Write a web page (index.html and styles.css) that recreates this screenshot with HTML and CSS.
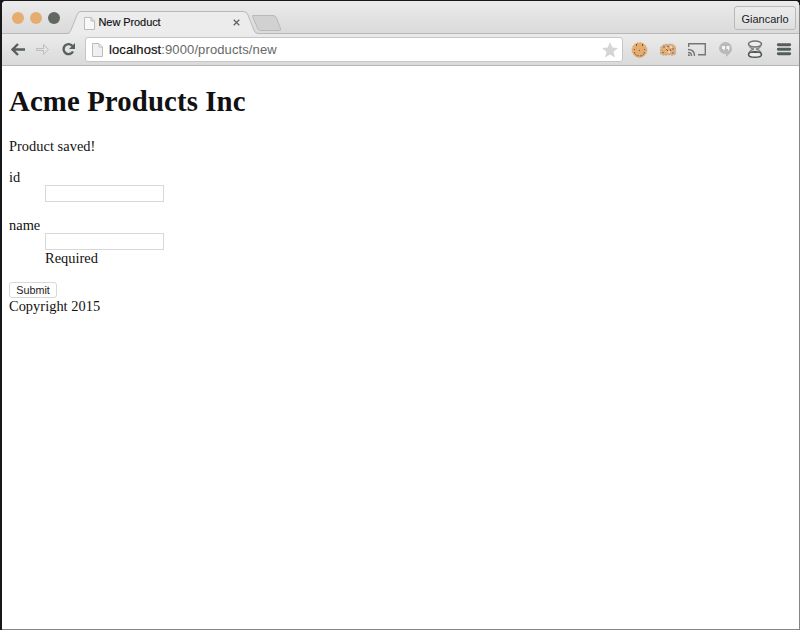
FILE: index.html
```html
<!DOCTYPE html>
<html lang="en">
<head>
<meta charset="utf-8">
<title>New Product</title>
<link rel="stylesheet" href="styles.css">
</head>
<body>
<div class="window">
  <header class="tabstrip">
    <div class="lights"><i class="light"></i><i class="light"></i><i class="light dark"></i></div>
    <div class="tab">
      <svg class="tab-shape" width="217" height="24" viewBox="0 0 217 24"><path d="M0 23.500C4 23 4 21 5 19L11 4Q12 1 15 1H178Q181 1 182 4L188 19Q189 22.500 192 22.500H192V24H0Z" fill="#ececec"/><path d="M0 22.500C4 22.500 4 21 5 19L11 4Q12 .5 15 .5H177Q181 .5 182 4L188 19Q189 22.500 192 22.500H217" fill="none" stroke="#b8b8b8"/><path d="M186.500 5.500Q185.500 4.500 188 4.500H207Q209.500 4.500 210.500 7L214.500 17.500Q215.500 19.500 213 19.500H194.500Q192.500 19.500 191.500 17Z" fill="#d1d1d1" stroke="#b8b8b8"/></svg>
      <svg class="page-icon" width="11" height="13" viewBox="0 0 11 13"><path d="M.5.5H7L10.500 4V12.500H.5ZM7 .5V4H10.500" fill="#f8f8f8" stroke="#bcbcbc"/></svg>
      <span class="tab-title">New Product</span>
      <svg class="close" width="7" height="7" viewBox="0 0 7 7"><path d="M.7.7L6.300 6.300M6.300.7L.7 6.300" stroke="#606462" stroke-width="1.300"/></svg>
    </div>
    <div class="profile">Giancarlo</div>
  </header>
  <nav class="toolbar">
    <svg class="nav-icons" width="83" height="31" viewBox="2 34 83 31">
      <g fill="none" stroke="#58605a" stroke-width="2.400"><path d="M25 49.500H13M18 44L12.500 49.500L18 55"/><path d="M72.500 46A5 5 0 1 0 73 51.500"/></g>
      <path d="M75 43V49H69Z" fill="#58605a"/>
      <path d="M36.500 48.500H43.500V44.500L48.500 49.500L43.500 54.500V50.500H36.500Z" fill="#e2e2e2" stroke="#bdbdbd"/>
    </svg>
    <div class="address">
      <svg class="page-icon" width="11" height="14" viewBox="0 0 11 14"><path d="M.5.5H7L10.500 4V13.500H.5ZM7 .5V4H10.500" fill="#f0f0f0" stroke="#bcbcbc"/></svg>
      <span class="url"><b>localhost</b>:9000/products/new</span>
      <svg class="star" width="16" height="16" viewBox="0 0 16 16"><path d="M8 0L10.300 5.500L16 6L11.500 9.700L13 15.500L8 12.500L3 15.500L4.500 9.700L0 6L5.700 5.500Z" fill="#d5d5d5"/></svg>
    </div>
    <svg class="extensions" width="176" height="31" viewBox="623 34 176 31">
      <circle cx="639.500" cy="50" r="7.600" fill="#e5ac6d"/>
      <circle cx="639.500" cy="50" r="7.600" fill="none" stroke="#c3a37e" stroke-dasharray="1 2"/>
      <g fill="#655b4d"><path d="M636 44h1v2h-1zM642 44h1v2h-1zM639 50h1v1h-1zM634 49h1v1h-1zM644 49h1v1h-1z"/></g>
      <path d="M634.500 52Q635 56 639.500 56T644.500 52" fill="none" stroke="#655b4d" stroke-dasharray="1.500 1"/>
      <path d="M660.500 54V48Q663 43.500 668 44.500Q673 43 675.500 47V54Q673 56 669 54.500Q664 56 660.500 54Z" fill="#e3ad75" stroke="#b8a890" stroke-dasharray="2 1"/>
      <path d="M663 47h2M667 46l2 1M672 49h2M666 49l2 2M670 49l1 2M662 52l2 1M672 53h2" stroke="#756b5c"/>
      <path d="M670 47h2M666 48h1M668 52h2" stroke="#fff"/>
      <g fill="none" stroke="#737875" stroke-width="1.400"><path d="M688.700 47V43.700H705.300V54.800H698"/><path d="M688 49.500Q694.500 49.500 694.500 56M688 52.500Q691.500 52.500 691.500 56"/></g><path d="M688 54v2h2q0-2-2-2z" fill="#737875"/>
      <path d="M725.500 42A6.500 6.500 0 0 1 732 48.500C732 52 729 54 726 57V54A6.200 6.200 0 0 1 719 48.500A6.500 6.500 0 0 1 725.500 42Z" fill="#b9b9b9"/>
      <path d="M722 46h3v3l-1.500 2v-2H722zM726.500 46h3v3L728 51v-2h-1.500z" fill="#f5f5f5"/>
      <ellipse cx="755" cy="44" rx="6.500" ry="3" fill="#eee" stroke="#707571" stroke-width="1.600"/>
      <path d="M749 45Q750 48.500 754 49Q750 50 749 53M761 45Q760 48.500 756 49Q760 50 761 53" fill="none" stroke="#858985" stroke-width="1.300"/>
      <ellipse cx="755" cy="54.500" rx="6.500" ry="2.800" fill="#eee" stroke="#505651" stroke-width="1.600"/>
      <path d="M751 53Q755 50 759 53Z" fill="#505651"/>
      <path d="M778.300 44.700H789.700M778.300 49.200H789.700M778.300 53.700H789.700" stroke="#555d57" stroke-width="2.900" stroke-linecap="round"/>
    </svg>
  </nav>
  <main class="page">
    <h1>Acme Products Inc</h1>
    <p>Product saved!</p>
    <form>
      <dl>
        <dt><label for="id">id</label></dt>
        <dd><input id="id" type="text"></dd>
      </dl>
      <dl>
        <dt><label for="name">name</label></dt>
        <dd><input id="name" type="text"></dd>
        <dd>Required</dd>
      </dl>
      <button type="button">Submit</button>
    </form>
    <footer>Copyright 2015</footer>
  </main>
</div>
</body>
</html>
```
FILE: styles.css
```css
* { box-sizing: border-box; }
body {
  margin: 0;
  height: 630px;
  padding: 1px 1px 1px 2px;
  overflow: hidden;
  background: linear-gradient(#18181a, #18181a) left / 2px 100% no-repeat, linear-gradient(#18181a, #18181a) top / 100% 5px no-repeat, #858585;
}
svg { display: block; flex: none; }
.window {
  height: 628px;
  background: #fff;
  border-radius: 4px 4px 0 0;
  overflow: hidden;
  font-family: "Liberation Sans", Arial, sans-serif;
}
.tabstrip {
  display: flex;
  height: 33px;
  padding-right: 3px;
  background: linear-gradient(#ebebeb, #e6e6e6 30%, #dadada);
  border-bottom: 1px solid #b8b8b8;
}
.lights {
  display: flex;
  gap: 6px;
  padding: 11px 0 0 10px;
  width: 64px;
}
.light { width: 12px; height: 12px; border-radius: 50%; background: #e5ae70; }
.dark { background: #616862; }
.tab {
  position: relative;
  display: flex;
  align-items: center;
  width: 217px;
  height: 24px;
  margin-top: 10px;
  padding-left: 18px;
}
.tab-shape { position: absolute; left: 0; top: 0; }
.tab .page-icon, .tab-title, .close { position: relative; }
.tab-title { width: 135px; margin: -2px 0 0 3.500px; font-size: 11px; line-height: 16px; letter-spacing: -.08px; color: #111; -webkit-text-stroke: .15px #111; }
.close { margin: -1px 0 0 -.5px; }
.profile {
  width: 62px;
  height: 24px;
  margin: 5px 0 0 auto;
  border: 1px solid #b9b9b9;
  border-radius: 3px;
  background: linear-gradient(#ececec, #dfdfdf);
  color: #1b1b1b;
  font-size: 11px;
  line-height: 24px;
  text-align: center;
}
.toolbar {
  display: flex;
  height: 32px;
  background: linear-gradient(#ebebeb, #dadada);
  border-bottom: 1px solid #b6b6b6;
}
.address {
  display: flex;
  align-items: center;
  width: 538px;
  height: 25px;
  margin-top: 3px;
  padding: 0 4px 0 6px;
  border: 1px solid #c6c6c6;
  border-radius: 3px;
  background: #fff;
}
.url { margin-left: 6px; font-size: 13px; line-height: 18px; letter-spacing: .11px; color: #656965; white-space: nowrap; }
.url b { font-weight: 400; color: #111; -webkit-text-stroke: .2px #111; }
.star { margin-left: auto; }
.page {
  padding: 19px 7px 0;
  font-family: "Liberation Serif", "Times New Roman", serif;
  font-size: 14.400px;
  line-height: 17px;
  letter-spacing: .03px;
  color: #111;
}
h1 { margin: 0; height: 32px; font-size: 28.800px; line-height: 32px; letter-spacing: .12px; white-space: nowrap; }
p { margin: 21px 0 14px; }
dl { margin: 0 0 15px; }
dt { height: 16px; }
dd { margin: 0 0 0 36px; }
input {
  display: block;
  width: 119px;
  height: 17px;
  border: 1px solid #d8d8d8;
  background: #fff;
}
button {
  display: block;
  width: 48px;
  height: 16px;
  padding: 0;
  border: 1px solid #d8d8d8;
  border-radius: 3px;
  background: #fff;
  color: #1b1b1b;
  font: 10.800px/14px "Liberation Sans", Arial, sans-serif;
}
```
